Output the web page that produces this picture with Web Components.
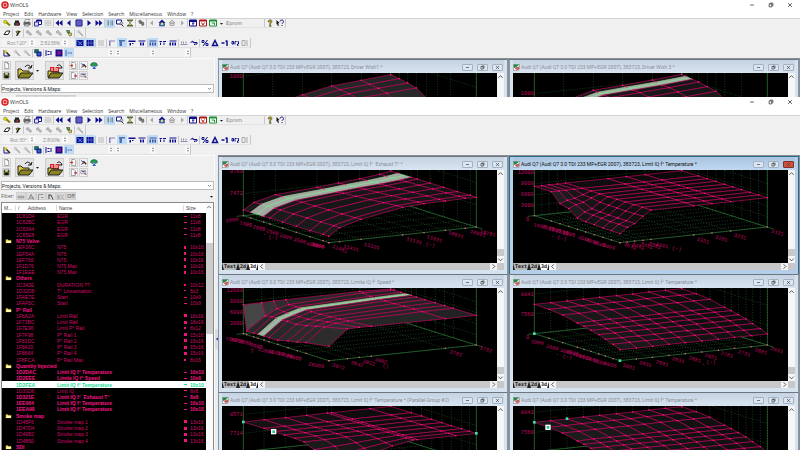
<!DOCTYPE html>
<html lang="en">
<head>
<meta charset="utf-8">
<title>WinOLS</title>
<style>
html,body{margin:0;height:100%;overflow:hidden;background:#fff}
body{display:flex;flex-direction:column;font:5px/6px "Open Sans","Noto Sans",sans-serif;color:#333}
.back{flex:0 0 97px}
.front{flex:1 1 0;min-height:0}
</style>
</head>
<body>
<ols-app class="back" brief rot="Rot:120°" zoom="Z:8238%">
  <mdi-window caption="Audi Q7 (Audi Q7 3.0 TDI 233 MP+EGR 2007), 383723, Driver Wish1 *" brief><map-surface map="wish1"></map-surface></mdi-window>
  <mdi-window caption="Audi Q7 (Audi Q7 3.0 TDI 233 MP+EGR 2007), 383723, Driver Wish 3 *" brief><map-surface map="wish3"></map-surface></mdi-window>
</ols-app>
<ols-app class="front" rot="Rot:30°" zoom="Z:800%">
  <mdi-window caption="Audi Q7 (Audi Q7 3.0 TDI 233 MP+EGR 2007), 383723, Limit IQ f°  Exhaust T° *"><map-surface map="exhaust"></map-surface></mdi-window>
  <mdi-window active caption="Audi Q7 (Audi Q7 3.0 TDI 233 MP+EGR 2007), 383723, Limit IQ f° Temperature *"><map-surface map="temp"></map-surface></mdi-window>
  <mdi-window caption="Audi Q7 (Audi Q7 3.0 TDI 233 MP+EGR 2007), 383723, Limite IQ f° Speed *"><map-surface map="speed"></map-surface></mdi-window>
  <mdi-window caption="Audi Q7 (Audi Q7 3.0 TDI 233 MP+EGR 2007), 383723, Limit IQ f° Temperature *"><map-surface map="temp2"></map-surface></mdi-window>
  <mdi-window caption="Audi Q7 (Audi Q7 3.0 TDI 233 MP+EGR 2007), 383723, Limit IQ f° Temperature * (Parallel-Group #2)" brief><map-surface map="group"></map-surface></mdi-window>
  <mdi-window caption="Audi Q7 (Audi Q7 3.0 TDI 233 MP+EGR 2007), 383723, Limit IQ f° Temperature *" brief><map-surface map="temp3"></map-surface></mdi-window>
</ols-app>

<script>
const N='#10108c', G='#a8a8a8';
const P=(d,f,s='none',w=1)=>`<path d="${d}" fill="${f}" stroke="${s}" stroke-width="${w}"/>`;
const bars=(c)=>P('M1 3H15V5H1ZM1 7H4V13H1ZM6 7H9V13H6ZM11 7H14V13H11Z',c);
const wand=(c,y)=>P('M6 6L14 14',"none",c,3)+P('M5 1V9M1 5H9M2 2L8 8M8 2L2 8','none',y,1);
const ICONS={
 key:P('M5 5L14 13','none','#8a8a00',4)+P('M2 3L7 3L8 7L4 9L1 7Z','#e8e000','#777700'),
 bell:P('M4 3H12V13H4Z','#222')+P('M2 7H14V13H2Z','#333')+P('M7 8H10V12H7Z','#b03030'),
 print:P('M5 1H13L11 6H3Z','#fff','#444')+P('M1 6H15V12H1Z','#666')+P('M4 10H12V14H3Z','#ccc','#444'),
 propwin:P('M5 2H15V11H5Z','#fff',N,2)+P('M5 2H15V5H5Z',N)+P('M1 6H9V14H1Z','#dde','#3030a0',2),
 tiles:P('M2 3H7V7H2ZM9 3H14V7H9ZM2 9H7V13H2ZM9 9H14V13H9Z','#eee',G),
 rew:P('M8 2V14L1 8ZM15 2V14L8 8Z',N), prev:P('M11 2V14L4 8Z',N),
 grid:P('M2 2H14V14H2Z','#9a9ae0',N,2)+P('M6 2V14M10 2V14M2 6H14M2 10H14','none',N),
 next:P('M5 2V14L12 8Z',N), fwd:P('M1 2V14L8 8ZM8 2V14L15 8Z',N),
 cols:P('M3 3H6V13H3ZM8 3H9V13H8ZM11 3H14V13H11Z','#7a8a98'),
 find:P('M1 2H11V10H1Z','#fff',N,2)+P('M9 6A3 3 0 1 1 8 10Z','#bcd','#333',1)+P('M11 11L15 15','none','#222',2),
 hour:P('M2 1H14V4H2ZM2 12H14V15H2Z','#557040')+P('M4 4H12L8 8L12 12H4L8 8Z','#e6e060','#555'),
 bino:P('M3 4L7 2L10 6L6 10ZM8 7L13 6L14 12L10 13Z','#777','#555'),
 left:P('M10 3V13L4 8Z',G), right:P('M6 3V13L12 8Z',G),
 home:P('M8 1L15 8H1Z',N)+P('M3 9H13V14H3Z','#4080c0',N)+P('M6 7H10V12H6Z','#dfe060'),
 homeg:P('M8 2L14 8H2Z','#ddd',G,2)+P('M4 9H12V13H4Z','#ddd',G,2),
 p1:P('M1 2H15V14H1Z','#fff',N,2)+P('M1 2H15V6H1Z',N)+P('M6 8H11M8 8V13','none',N,2),
 p2:P('M1 2H15V14H1Z','#fff','#b01818',2)+P('M1 2H15V5H1Z','#b01818')+P('M5 7L8 12L11 7','none','#b01818',2),
 p3:P('M1 2H15V14H1Z','#fff','#169030',2)+P('M1 2H15V5H1Z','#169030')+P('M5 8H11V12','none','#169030',2),
 help:P('M4 6C4 0 12 0 12 5C12 8 9 8 9 11H7C7 8 9 7 9 5C9 4 7 4 7 6ZM7 12H10V15H7Z','#b0a800','#444'),
 whats:P('M1 2L7 8L4 9L6 13L4 14L2 10L1 11Z','#111')+P('M8 5C8 1 15 1 15 5C15 8 12 8 12 10M12 12V14','none',N,2),
 erase:P('M2 11L7 4H14L10 11Z','#fff','#222',2),
 magic:P('M3 5L8 3L14 5L10 8L8 13L4 14L6 9Z','#222')+P('M4 5H9L7 8Z','#d8d820'),
 toolg:P('M3 4L7 3L9 7L13 9L12 13L8 11L5 8L3 8Z','#b8b8b8','#999'),
 tool:P('M3 3H9L9 8L5 8Z','#48b048','#222')+P('M6 8L13 8L13 13L9 14Z','#e0d040','#333'),
 mapA:P('M1 2H15V14H1Z',N)+P('M3 4L12 12M5 12L12 5','none','#6aa0ff',2),
 mapB:P('M1 2H15V14H1Z',N)+P('M5 2V14M10 2V14M1 8H15','none','#7a9af0',1),
 listg:P('M2 3H14V5H2ZM2 7H14V9H2ZM2 11H14V13H2Z','#b8b8b8'),
 ax1:P('M2 3H14V5H5V14H2Z','#8080b8'), ax2:P('M2 2H14V5H8V14H3V5H2Z','#5070b0'),
 ax3:P('M1 3H15V6H1ZM3 8H6V13H3ZM8 8H11V10H8Z',N), ax4:P('M1 3H15V5H1ZM4 7H7V13H4ZM9 7H12V13H9Z',N),
 b8:bars('#3a50a0'), b16:P('M1 4H6V6H1ZM8 4H14V6H8ZM2 7H4V12H2ZM9 7H11V12H9Z',N), b32:bars(N),
 hex:P('M1 10H15V12H1ZM2 5H4V9H2ZM6 5H8V9H6ZM11 5H13V9H11Z','#9090a8'),
 undo:P('M1 7L6 4V7H14V10H9V12','none',N,2),
 pct:P('M13 2L4 14','none',N,2)+P('M2 3H6V7H2ZM10 9H14V13H10Z','none',N,2),
 delta:P('M8 3L13 13H3Z','none',N,3), m1:P('M1 8H7M12 3V14M9 5L12 3','none',N,3),
 org:P('M2 5H5V10H2ZM8 11V5H11M13 5H15V10H13V13H15','none',N,2),
 listb:P('M2 3H8V13H2Z','none',G,2)+P('M10 4H14M10 8H14M10 12H14','none',G,2),
 pen:P('M2 2V14H12','none',N,2)+wand('#222','#e0c800'), peng:wand(G,'#bbb'),
 sel:P('M1 1H9V8H1Z','#187068','#104040')+P('M6 6H14V14H6Z','#3060c0',N,2),
 sp1:P('M2 2V14M5 5H9M5 11H9M12 4V12','none',N,2), sp2:P('M1 1H15V15H1Z',N)+P('M4 4H12V12H4Z','#7a1090'), sp3:P('M2 2V14M5 8H9M12 6V10','none','#4060b0',2),
 doc:P('M4 1H10L13 4V15H4Z','#fff','#333',1)+P('M10 1V4H13','none','#333'),
 disk:P('M2 2H14V14H2Z','#5a5a18','#222')+P('M5 2H11V6H5Z','#ddd')+P('M5 9H11V14H5Z','#111'),
 docred:P('M4 1H10L13 4V15H4Z','#fff','#333')+P('M0 8H6L4 5M6 8L4 11','none','#c02020',2),
 docout:P('M3 1H9L12 4V15H3Z','#fff','#333')+P('M9 9H15L12 6M15 9L12 12','none','#c01040',2),
 dna:P('M2 3L9 8L3 13','none','#2050c0',2)+P('M8 5L14 12','none','#222',3)+P('M4 8H9V11H4Z','#c04040'),
 earth:P('M1 7A7 6 0 0 1 15 7L11 9L8 6L5 9Z','#20a040','#204080')+P('M8 7L12 14H5Z','#3060d0'),
 calc:P('M2 3H13V11H2Z','#eef','#444')+P('M4 5H11V7H4Z','#304080')+P('M9 8L15 14','none','#a02040',2),
 dd:P('M3 6H13L8 12Z','#222'),
 updown:P('M5 6L8 2L11 6ZM5 10L8 14L11 10Z','#777'),
 up:P('M3 11L8 6L13 11','none','#444',2), down:P('M3 6L8 11L13 6','none','#444',2),
 lt:P('M11 3L6 8L11 13','none','#444',2), gt:P('M6 3L11 8L6 13','none','#444',2),
 min:P('M3 8H13','none','#333',2), max:P('M3 5H10V13H3ZM6 5V3H13V10H10','none','#333',2), close:P('M3 3L13 13M13 3L3 13','none','#333',2),
 app:'<circle cx="8" cy="8" r="6" fill="#fff" stroke="#d82020" stroke-width="3"/>'+P('M5 5H11V11H5Z','#d83030'),
 win:P('M1 1H15V12L11 15H1Z','#fff','#555',1)+P('M1 1H14L8 7L2 9Z','#208848')+P('M3 9L14 5V12L9 14Z','#c86060'),
 folder:P('M1 4H6L8 6H15V13H1Z','#f0e060','#b09020')+P('M4 8H15L13 13H1Z','#ffffb0'),
 open:P('M1 6H4L6 8H12V14H1Z','#e0c840','#222')+P('M4 10H16L12 15H1Z','#8a8420','#222')+P('M8 4C10 1 13 2 14 5M14 5L11 5M14 5L15 2','none','#111'),
 openred:P('M3 4H12V11H3Z','#e02020')+P('M5 5V8M8 4V8M10 5V8','none','#fff')+P('M1 8H4L6 9H12V14H1Z','#e0c840','#222')+P('M4 10H16L12 15H1Z','#8a8420','#222')+P('M10 3C12 1 14 2 15 5L12 5','none','#111'),
 f1:P('M2 6H14V10H2Z','#b4b4b4','#888'), f2:P('M3 13L8 3L13 13M5 10H14','none','#888',2), f3:P('M3 14V3H13M8 9H13','none','#999',2),
 f4:P('M3 4H8L12 13M4 4V12','none','#444',2), f5:P('M2 3V13M8 3L3 8L8 13M14 3L9 8L14 13','none','#999',2)
};
const ico=n=>`<svg viewBox="0 0 16 16" aria-hidden="true">${ICONS[n]}</svg>`;
const BASE=`*{box-sizing:border-box}button,input,select{font:inherit;color:inherit;margin:0;padding:0;border:0;border-radius:0;background:none;min-width:0;appearance:none}svg{display:block}`;
const define=(tag,render)=>customElements.define(tag,class extends HTMLElement{
  constructor(){super();this.attachShadow({mode:'open'})}
  connectedCallback(){this.shadowRoot.innerHTML='<style>'+BASE+'</style>'+render(this)}
});

/* One icon button of a toolbar */
define('tool-button',el=>`<style>
:host{display:block;flex:none;width:10px;height:9px}
button{width:100%;height:100%;display:grid;place-items:center}
:host([on]) button{background:#bfdcf4}
:host([raised]) button{background:#f4f4f4;border:1px solid #d0d0d0}
:host([sunk]) button{background:#dcdcdc;border:1px solid #cfcfcf}
svg{width:8px;height:8px}
:host([raised]) svg{width:7px;height:7px}
:host([big]){width:19px;height:19px}:host([big]) svg{width:16px;height:16px}
:host([big]) button{background:#e4e4e4;border:1px solid #cdcdcd}
:host([narrow]){width:6px}:host([narrow]) svg{width:5px;height:5px}
</style><button type="button" aria-label="${el.getAttribute('icon')}">${ico(el.getAttribute('icon'))}</button>`);

/* Text field with a spinner */
define('spin-field',el=>`<style>
:host{display:flex;flex:none;align-items:center;width:33px;height:8px;color:#8a8a8a}
input{flex:1;text-align:right;height:8px;background:#f4f4f4}
button{width:6px;height:7px;background:#fafafa;margin-left:2px}svg{width:6px;height:7px}
:host([bare]){width:7px}
</style>${el.hasAttribute('bare')?'':`<input aria-label="View" value="${el.getAttribute('value')}">`}<button type="button" aria-label="Step">${ico('updown')}</button>`);

const bar=(...groups)=>'<div class="bar">'+groups.map(g=>g.split(' ').map(t=>{
  const on=t.endsWith('!');return `<tool-button icon="${t.replace('!','')}"${on?' on':''}></tool-button>`}).join('')).join('<i></i>');
define('ols-toolbars',el=>`<style>
:host{display:block;background:#f0f0f0;border-top:1px solid #d4d4d4}
.bar{display:flex;align-items:center;height:10px;width:max-content;padding-left:2px;border-right:1px solid #c8c8c8;border-bottom:1px solid #e2e2e2}
.bar:first-of-type{height:9px}
i{flex:none;width:1px;height:8px;background:#c8c8c8}
select{width:37px;height:8px;color:#777;margin-right:3px;padding-left:2px;font-family:"DejaVu Sans",sans-serif}
.gap{width:7px;background:none}.w{width:32px;background:none}.v{width:28px;background:none}
</style>
${bar('key bell print','propwin tiles','rew prev grid next fwd','cols! find hour','bino','left home homeg right','p1 p2 p3')}
<tool-button icon="dd" narrow></tool-button><select aria-label="Target"><option>Eprom</option></select><i></i><tool-button icon="help"></tool-button><tool-button icon="whats"></tool-button></div>
${bar('erase','magic','toolg toolg toolg toolg tool','peng')}</div>
<div class="bar"><spin-field value="${el.getAttribute('rot')}"></spin-field><spin-field value="${el.getAttribute('zoom')}"></spin-field><i class="gap"></i>${bar('mapA! mapB!','listg','ax1 ax2! ax3 ax4','b8! b16 b32','hex undo','pct delta m1 org listb').replace('<div class="bar">','')}</div>
${bar('pen peng peng','sel','sp1 sp2 sp3!')}<i class="w"></i><spin-field bare></spin-field><spin-field bare></spin-field><i class="v"></i><spin-field bare></spin-field><i class="v"></i><spin-field bare></spin-field></div>`);

const ROWS=`1C61D4|EGR|11x8|n
1C62BC|EGR|11x8|n
1C63A4|EGR|11x8|n
1C65E8|EGR|11x8|n
#N75 Valve
1EF36C|N75|10x16|t
1EF54A|N75|10x16|t
1EF766|N75|10x16|t
1F1D76|N75 Max|10x16|t
1F1EEE|N75 Max|10x16|t
#Others
1C342E|DURATION ??|10x12|s
1D32D8|T° Linearisation|5x3|d
1FAE7E|Start|10x9|n
1FAF5C|Start|10x9|n
#P° Rail
1F6A2A|Limit Rail|16x16|b
1F73BC|Limit Rail|16x16|b
1F7E96|Limit P° Rail|8x12|s
1F7F98|P° Rail 1|15x16|b
1F81DC|P° Rail 2|15x16|b
1F8420|P° Rail 3|15x16|b
1F8664|P° Rail 4|15x16|b
1F8FCA|P° Rail Max|8x16|s
#Quantity Injected
*1D2DAC|Limit IQ f° Temperature|10x10|n
*1D2EEE|Limite IQ f° Speed|10x6|n
!1D2FEA|Limit IQ f° Temperature|10x10|n
1D30D6|Limit IQ|8x8|n
*1D321E|Limit IQ f°  Exhaust T°|8x8|n
*1EE964|Limit IQ f° Temperature|10x10|n
*1EEA98|Limit IQ f° Temperature|10x10|n
#Smoke map
1D45F6|Smoke map 1|13x16|b
1D47D4|Smoke map 2|13x16|b
1D49B2|Smoke map 3|13x16|b
1D4B90|Smoke map 4|13x16|b
#SDI`.split('\n');
define('map-list',()=>`<style>
:host{display:flex;border:1px solid #888;border-bottom:0;background:#000}
table{flex:1;min-width:0;display:grid;grid-template-rows:10px minmax(0,1fr);font:5px/6px "Liberation Sans",sans-serif;color:#d00868}
tr{display:grid;grid-template-columns:14px 41px 1fr 6px 16px;align-items:center}
thead tr{background:#fff;color:#444;height:10px}
tbody{display:grid;grid-auto-rows:minmax(0,1fr)}
th,td{padding:0;text-align:left;font-weight:inherit;white-space:pre}
thead th{border-right:1px solid #ddd;padding-left:2px}
thead th:nth-child(4){grid-column:span 2;border:0}thead th:nth-child(2) span{padding-left:7px}
.b{font-weight:700;color:#f41484}
.sel{font-weight:700;color:#22e098;background:#fff}
.grp td:first-child{padding-left:3px}.grp td+td{grid-column:span 3}
svg{width:7px;height:6px}
i{display:block;width:3px;height:3px;background:#f01080}
i.n{height:1px}i.s{width:2px;height:2px}i.d{width:2px;height:1px}i.t{width:2px}
.sel i{background:#22e098}
.scroll{flex:0 0 7px;background:#fafafa;display:grid;grid-template-rows:40px 91px 1fr}
.scroll svg{width:6px;height:8px}.scroll b{background:#cdcdcd}
</style><table><thead><tr><th>M...</th><th>/ <span>Address</span></th><th>Name</th><th>Size</th></tr></thead><tbody>${ROWS.map(r=>{
  if(r[0]=='#')return `<tr class="grp b"><td>${ico('folder')}</td><td>${r.slice(1)}</td></tr>`;
  const c=r[0]=='*'?'b':r[0]=='!'?'sel':'';const [a,n,s,k]=r.replace(/^[*!]/,'').split('|');
  return `<tr class="${c}"><td></td><td>${a}</td><td>${n}</td><td><i class="${k}"></i></td><td>${s}</td></tr>`}).join('')}</tbody></table>
<div class="scroll">${ico('up')}<b></b></div>`);

define('project-panel',el=>`<style>
:host{display:flex;flex-direction:column;background:#f0f0f0;padding:0 0 0 1px;min-height:0;border-top:1px solid #fafafa}
.files{display:flex;flex:none;align-items:center;height:25px;padding:0 0 2px 1px}
.col{display:grid;gap:1px;grid-template-columns:repeat(var(--n),9px);margin-right:4px}
.col tool-button{width:9px}
.files>tool-button[icon=openred]{margin:0 5px}
.files>tool-button[narrow]{height:19px}
label{display:flex;align-items:center}
.combo{flex:none;height:9px;background:#fff;border:1px solid #bbb;font-size:5px;color:#222}
.combo select{flex:1;height:7px;font-family:Roboto,sans-serif}.combo svg{width:7px;height:5px}
.filter{display:flex;flex:none;align-items:center;height:12px;color:#555}
.filter span{width:15px}.filter tool-button{height:8px}
.off{height:8px;width:10px;background:#dcdcdc;border:1px solid #cfcfcf;line-height:5px;color:#333}
.filter tool-button:last-child{margin-left:auto}
map-list{flex:1;min-height:0}
</style>
<div class="files"><div class="col" style="--n:1"><tool-button raised icon="doc"></tool-button><tool-button raised icon="disk"></tool-button></div>
<tool-button big icon="open"></tool-button><tool-button narrow icon="dd"></tool-button><tool-button big icon="openred"></tool-button>
<div class="col" style="--n:3"><tool-button raised icon="docred"></tool-button><tool-button raised icon="dna"></tool-button><tool-button icon="earth"></tool-button><tool-button raised icon="docout"></tool-button><tool-button raised icon="calc"></tool-button></div></div>
<label class="combo"><select aria-label="Projects"><option>Projects, Versions &amp; Maps:</option></select>${ico('down')}</label>
<div class="filter"><span>${el.hasAttribute('brief')?'':'Filter:'}</span>${['f1','f2','f3','f4','f5'].map(f=>`<tool-button sunk icon="${f}"></tool-button>`).join('')}<button class="off" type="button" aria-label="Off">${el.hasAttribute('brief')?'':'Off'}</button><tool-button icon="dd" narrow></tool-button></div>
${el.hasAttribute('brief')?'':'<map-list></map-list>'}`);

/* A brief window shows only its upper part, so it has no sheet tabs */
define('mdi-window',el=>`<style>
:host{display:grid;grid-template-rows:13px 93px 7px;height:118px;min-width:0;border:1px solid #8a949e;border-top-color:#6e7780;padding:0 3px 3px;background:#d5e2f0;color:#8c8f96}
:host([active]){background:#b4cfea;border-color:#2a6a88;color:#111}
header{display:flex;align-items:center;gap:1px;padding-top:1px;background:linear-gradient(#c5d3e2,#d8e4f1)}
:host([active]) header{background:linear-gradient(#a9c4e0,#c0d8f0)}
header>svg{width:7px;height:7px;flex:none}
span{flex:1;font:5px/8px Roboto,sans-serif;white-space:pre;overflow:hidden}
header button{width:11px;height:7px;margin-left:2px;margin-right:1px;border:1px solid #a4b2c0;border-radius:1px;background:#dbe6f2;display:grid;place-items:center}
header button svg{width:5px;height:5px}
:host([active]) header button:last-child{background:#d0503c;border-color:#803028}
main{display:grid;grid-template-columns:minmax(0,1fr) 7px;background:#000;overflow:hidden}
.vs{background:#f6f6f6;display:grid;grid-template-rows:8px 71px 7px 7px}.vs b{background:#c8c8c8}
svg{width:7px;height:7px}
footer{display:flex;background:#f4f4f4}
nav{display:flex;background:#222}
footer button{height:7px;background:#b8b8b8;color:#111;font:700 5px/7px "DejaVu Sans Mono",monospace;padding:0 2px;clip-path:polygon(0 0,100% 0,calc(100% - 2px) 100%,2px 100%)}
footer button:nth-child(3){background:#fff}
footer b{flex:1;background:#c8c8c8}footer i{width:7px;background:#c8c8c8}
</style><header>${ico('win')}<span>${el.getAttribute('caption')}</span><button type="button" aria-label="Minimize">${ico('min')}</button><button type="button" aria-label="Restore">${ico('max')}</button><button type="button" aria-label="Close">${ico('close')}</button></header>
<main><slot></slot><div class="vs">${ico('up')}<i></i><b></b>${ico('down')}</div></main>
${el.hasAttribute('brief')?'':`<footer><nav><button type="button">Text</button><button type="button">2d</button><button type="button">3d</button></nav>${ico('lt')}<b></b>${ico('gt')}<i></i></footer>`}`);

/* Surfaces: u runs along the front axis, v along the left axis, h is the height.
   Drawing units are a third of a pixel, with the left base corner at (64,137). */
const tenth=[0,1/9,2/9,3/9,4/9,5/9,6/9,7/9,8/9,1];
const drop=[0,.17,.33,.5,.58,.66,.75,.83,.92,1], dropH=[88,87,83,73,69,63,58,50,43,33];
const wishH=[2,28,53,70,77,85];
const MAPS={
 wish1:{u:[0,.2,.4,.6,.8,1],v:[0,.1,.2,.3,.42,.55,.7,1],h:(i,j)=>wishH[i]*[1,.95,.9,.81,.58,.35,.1,0][j],base:40,z:[9],zl:['1000'],lab:''},
 wish3:{u:[0,.2,.4,.6,.8,1],v:[0,.05,.12,.2,.3,.4,.5,.7,1],h:(i,j)=>[10,42,66,72,78,86][i]*[1,.98,.94,.92,.85,.78,.6,.3,.1][j],base:26,band:[1],z:[62],zl:['1000'],lab:''},
 exhaust:{u:[0,.072,.217,.5,.645,.79,.925,1],v:[0,.086,.237,.31,.46,.62,.78,.93,1],
  h:(i,j,v)=>{const a=[17,37,53,62,68,74,81,87][i],b=[19,42,60,83,87,88,90,89][i];return a+(b-a)*v},base:26,band:[1],z:[4,71],zl:['9769','7472'],
  lab:'1000,30,150,-8 1500,70,162,12 2000,110,174,12 2500,150,186,14 -,128,194,0 (-),153,201,0 3000,190,200,14 3500,232,212,14 4000,270,224,10 4500,288,228,10 5000,286,226,14 11481,352,236,20 11431,386,234,14 11331,448,228,14 11131,575,212,16 (-),624,224,10 11031,636,206,16 10931,700,194,16 10831,766,190,16 10781,796,190,12'},
 temp:{u:[0,.05,.1,.155,.21,.5,.625,.75,1],v:[0,.2,.3,.4,.5,.6,.7,.8,.9,1],
  h:(i,j)=>88-[0,0,28,35,54,57,58,60,60,61][j]*([1,.72,.58,.27][i]||0),base:20,z:[7,41,74,106],zl:['12000','9000','6000','3000'],
  lab:'0,44,148,0 1000,80,168,10 1500,105,174,12 2000,124,180,12 2500,146,186,12 3000,166,192,12 -,118,200,0 (-),146,204,10 3500,212,206,14 4000,236,214,14 4500,258,222,14 5000,286,230,16 3531,350,228,18 3481,374,228,18 3431,400,226,18 3381,424,226,18 3361,446,226,14 (-),490,236,10 3331,568,212,16 3281,624,206,16 3231,680,200,16 3131,792,188,16'},
 speed:{u:[0,.125,.205,.287,.79,1],v:[0,.04,.12,.17,.24,.3,.4,.52,.63,.73,1],
  h:(i,j)=>{const m=[12,55,66,77,85,87];return [[87,87,88,89,90,87],[11,50,69,77,88,87],m,m,m,m,m,[20,60,72,80,87,88],[26,67,76,82,88,88],[32,73,80,84,88,88],[43,89,90,90,89,89]][j][i]},base:40,band:[3],z:[7,40,73,106],zl:['12000','9000','6000','3000'],
  lab:'1500,28,154,10 3000,44,158,10 5000,68,163,12 9000,102,174,12 7,90,190,0 12000,130,188,14 15000,162,194,14 17500,188,200,14 20000,214,208,12 26500,282,232,10 3972,348,236,16 3942,404,228,16 3922,440,224,14 3902,476,218,14 (),490,234,10 3782,700,196,16 3732,790,184,16'},
 temp2:{u:tenth,v:drop,h:(i,j)=>dropH[j],base:22,z:[18,78],zl:['8841','7560'],pins:[[0,0,0],[0,1,0]],
  lab:'0,44,148,0 1000,72,163,8 2000,116,178,14 3000,158,190,14 -,132,200,0 (-),162,206,10 3500,176,194,14 4000,196,202,14 4500,214,208,14 5000,236,214,14 5500,258,222,14 6000,290,230,14 3081,346,236,16 3031,396,228,16 2981,446,226,16 2931,494,216,16 2881,544,214,16 -,570,228,0 (-),594,222,0 2831,592,206,16 2781,640,200,16 2731,692,196,16 2681,742,190,16 2631,790,186,16'},
 group:{u:[0,.14,.285,.43,.57,.6,.86,1],v:[0,.24,.36,.48,.6,.71,.83,.92,1],
  h:(i,j)=>89-[0,0,0,0,0,2,16,36,55][j]*([1,.8,.5,.2][i]||0),base:20,z:[25,82],zl:['8571','7714'],lab:'',pins:[[0,0,89],[1,1,89]],cursor:[155,77]},
 temp3:{u:tenth,v:drop,h:(i,j)=>dropH[j],base:24,z:[19,79],zl:['8841','7560'],lab:'',pins:[[0,0,88],[2/9,0,89]],cursor:[105,64]}
};
const pt=(u,v,h)=>[Math.round(64+257*v+442*u),Math.round(137+81*v-47*u-h)];
const line=(a,b,c,x='')=>`<path d="M${a}L${b}" stroke="${c}" ${x}/>`;
function surface(m){
  const dot='stroke-dasharray="3 5"',gd='#225c2c',g='#2c7a38';let s='';
  m.u.forEach(u=>{const a=pt(u,0,0);s+=line([a[0],0],a,gd,dot)+line(a,pt(u,1,0),gd,dot)});
  m.v.forEach(v=>{const a=pt(1,v,0);s+=line([a[0],0],a,gd,dot)+line(pt(0,v,0),a,gd,dot)});
  m.z.forEach(z=>{s+=line([64,z],[506,z-47],gd,dot)+line([506,z-47],[763,z+34],gd,dot)});
  s+=line([44,139],[64,137],g)+line([64,137],[506,90],g)+line([506,90],[781,177],g)+line([64,137],[321,218],g)+line([321,218],[763,171],g)+line([64,0],[64,137],g)+line([763,0],[763,171],g);
  const p=m.v.map((v,j)=>m.u.map((u,i)=>pt(u,v,m.h(i,j,v))));
  for(let i=m.u.length-2;i>=0;i--)for(let j=0;j<m.v.length-1;j++){
    const rise=Math.abs(m.h(i,j,m.v[j])-m.h(i,j+1,m.v[j+1]));
    const k=Math.round(m.base+Math.min(30,rise*.4)-i*1.5),band=m.band&&m.band.includes(j);
    s+=`<path d="M${p[j][i]}L${p[j][i+1]}L${p[j+1][i+1]}L${p[j+1][i]}Z" fill="${band?'#a4a8a4':`rgb(${k},${k},${k})`}" stroke="${band?'#80e090':'#c0085e'}"/>`;
  }
  if(m.band){const j=m.band[0];s+=`<path d="M${p[j].map((a,i)=>[(a[0]+p[j+1][i][0])>>1,(a[1]+p[j+1][i][1])>>1]).join('L')}" fill="none" stroke="#80f090"/>`}
  const sq=(x,y,r,c)=>`<rect x="${x-r}" y="${y-r}" width="${2*r}" height="${2*r}" fill="${c}" stroke="none"/>`;
  p.flat().forEach(([x,y])=>s+=sq(x,y,2,'#ff1484'));
  m.u.forEach(u=>{const a=pt(u,1,0);s+=sq(a[0],a[1],2,'#e06080')});m.v.forEach(v=>{const a=pt(0,v,0);s+=sq(a[0],a[1],2,'#e06080')});
  (m.pins||[]).forEach(q=>{const a=pt(...q);s+=sq(a[0],a[1],4,'#40e0a0')});
  if(m.cursor)s+=sq(...m.cursor,8,'#fff')+sq(...m.cursor,4,'#30c080');
  const t=(x,y,r,w,anchor)=>`<text x="${x}" y="${y}" text-anchor="${anchor}" transform="rotate(${r} ${x} ${y})">${w}</text>`;
  m.zl.forEach((w,i)=>s+=t(62,m.z[i]+5,0,w,'end'));
  if(m.lab)m.lab.split(' ').forEach(q=>{const [w,x,y,r]=q.split(',');s+=t(+x,+y+5,r,w,'middle')});
  return s;
}
define('map-surface',el=>`<style>
:host{display:block;min-width:0;background:#000}
svg{width:100%;height:93px}
text{font:16px "Liberation Mono",monospace;fill:#c00a62;stroke:none}
</style><svg viewBox="0 0 825 279" preserveAspectRatio="xMinYMin meet" stroke-width="2">${surface(MAPS[el.getAttribute('map')])}</svg>`);

define('ols-app',el=>`<style>
:host{display:flex;flex-direction:column;overflow:hidden;background:#f0f0f0}
.title{display:flex;height:9px;flex:none;align-items:center;background:#fff;padding:0 1px}
.title>svg{width:8px;height:8px;margin-right:1px}.title span{flex:1}
.title button{width:19px;height:9px;display:grid;place-items:center}.title button svg{width:6px;height:6px}
nav{display:flex;flex:none;height:9px;background:#fff;padding-left:3px;gap:5px;align-items:center}
nav button{line-height:8px;white-space:nowrap}
ols-toolbars{flex:none}
.work{flex:1;min-height:0;display:grid;grid-template-columns:214px 4px minmax(0,1fr);grid-template-rows:minmax(0,1fr)}
.split{background:#e8edf2;border-left:1px solid #fafafa;display:flex;align-items:center}
.split button{width:4px;height:20px;background:#dcdcdc;margin-top:72px}.split svg{width:4px;height:8px}
.mdi{display:grid;grid-template-columns:repeat(2,minmax(0,1fr));grid-auto-rows:118px;column-gap:1px;padding:1px 1px 0 0;background:#8a8f94;overflow:hidden}
</style>
<div class="title">${ico('app')}<span>WinOLS</span><button type="button" aria-label="Minimize">${ico('min')}</button><button type="button" aria-label="Restore">${ico('max')}</button><button type="button" aria-label="Close">${ico('close')}</button></div>
<nav>${['Project','Edit','Hardware','View','Selection','Search','Miscellaneous','Window','?'].map(t=>`<button type="button">${t}</button>`).join('')}</nav>
<ols-toolbars rot="${el.getAttribute('rot')}" zoom="${el.getAttribute('zoom')}"></ols-toolbars>
<div class="work"><project-panel ${el.hasAttribute('brief')?'brief':''}></project-panel><div class="split">${el.hasAttribute('brief')?'':`<button type="button" aria-label="Collapse">${ico('prev')}</button>`}</div><div class="mdi"><slot></slot></div></div>`);
</script>
</body>
</html>
